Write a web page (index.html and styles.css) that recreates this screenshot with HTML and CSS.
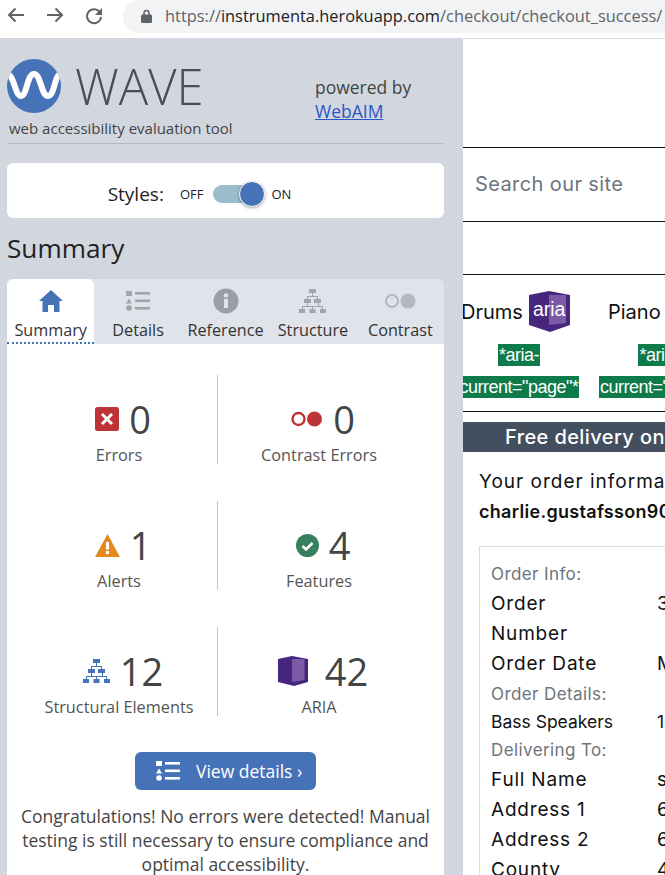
FILE: index.html
```html
<!DOCTYPE html>
<html lang="en">
<head>
  <meta charset="UTF-8">
  <meta name="viewport" content="width=device-width, initial-scale=1.0">
  <title>WAVE - Checkout Success</title>
  <link rel="stylesheet" href="styles.css">
</head>
<body>

  <!-- Browser toolbar -->
  <header class="toolbar">
    <svg class="tool" width="18" height="16" viewBox="0 0 18 16"><path d="M17 8H2M8.500 1.500 2 8l6.500 6.500" fill="none" stroke="#5f6368" stroke-width="2"/></svg>
    <svg class="tool" width="18" height="16" viewBox="0 0 18 16"><path d="M1 8h15M9.500 1.500 16 8l-6.500 6.500" fill="none" stroke="#5f6368" stroke-width="2"/></svg>
    <svg class="tool" width="18" height="18" viewBox="0 0 18 18"><path d="M15.500 6.500A7 7 0 1 0 16 10" fill="none" stroke="#5f6368" stroke-width="2"/><path d="M17 1v7h-7z" fill="#5f6368"/></svg>
    <div class="address">
      <svg width="11" height="14" viewBox="0 0 11 14"><path d="M3 6V4a2.500 2.500 0 0 1 5 0v2" fill="none" stroke="#5f6368" stroke-width="1.500"/><rect y="5.500" width="11" height="8.500" rx="1.500" fill="#5f6368"/></svg>
      <span class="url"><span class="url-dim">https://</span>instrumenta.herokuapp.com<span class="url-dim">/checkout/checkout_success/</span></span>
    </div>
  </header>

  <div class="split">

    <!-- WAVE sidebar -->
    <aside class="wave">
      <div class="brand">
        <div class="brand-left">
          <div class="logo-row">
            <svg width="54" height="54" viewBox="0 0 54 54"><clipPath id="logoClip"><circle cx="27" cy="27" r="27"/></clipPath><circle cx="27" cy="27" r="27" fill="#4673b7"/><path clip-path="url(#logoClip)" d="M0 15C7 15 8 37 14 37S20 15 27 15s7 22 14 22S47 15 54 15" fill="none" stroke="#fff" stroke-width="6"/></svg>
            <span class="logo-name">WAVE</span>
          </div>
          <div class="tagline">web accessibility evaluation tool</div>
        </div>
        <div class="powered">powered by<br><a href="#">WebAIM</a></div>
      </div>

      <div class="styles-card">
        <span class="styles-label">Styles:</span>
        <span class="styles-state">OFF</span>
        <span class="switch"><span class="knob"></span></span>
        <span class="styles-state">ON</span>
      </div>

      <h1>Summary</h1>

      <nav class="tabs">
        <a class="tab active" href="#">
          <svg width="26" height="24" viewBox="0 0 26 24"><path d="M13 1 1 12h3.500v11H10v-7h6v7h5.500V12H25z" fill="#4673b7"/></svg>
          Summary
        </a>
        <a class="tab" href="#">
          <svg width="24" height="20" viewBox="0 0 24 20" fill="#a2a5ab"><rect width="6" height="5"/><path d="M3 7.500 6 12.500H0z"/><circle cx="3" cy="17" r="2.800"/><rect x="9" y="1" width="15" height="2.600"/><rect x="9" y="8.500" width="15" height="2.600"/><rect x="9" y="16" width="15" height="2.600"/></svg>
          Details
        </a>
        <a class="tab" href="#">
          <svg width="26" height="26" viewBox="0 0 26 26"><circle cx="13" cy="13" r="12.500" fill="#9b9ea5"/><rect x="11" y="11" width="4" height="9" fill="#e0e3e9"/><circle cx="13" cy="7.500" r="2.200" fill="#e0e3e9"/></svg>
          Reference
        </a>
        <a class="tab" href="#">
          <svg width="27" height="24" viewBox="0 0 27 24" fill="#a2a5ab"><rect x="10" y="0" width="7" height="4"/><rect x="5" y="10" width="7" height="4"/><rect x="15" y="10" width="7" height="4"/><rect x="0" y="20" width="6" height="4"/><rect x="10.500" y="20" width="6" height="4"/><rect x="21" y="20" width="6" height="4"/><path d="M13 4h1v3h5v3h-1V8H9v2H8V7h5zM8 14h1v3h10v-3h1v3h4v3h-1v-2h-9v2h-1v-2H4v2H3v-3h5z"/></svg>
          Structure
        </a>
        <a class="tab" href="#">
          <svg width="32" height="16" viewBox="0 0 32 16"><circle cx="8" cy="8" r="6" fill="none" stroke="#b4b7bd" stroke-width="2"/><circle cx="24" cy="8" r="7.500" fill="#b4b7bd"/></svg>
          Contrast
        </a>
      </nav>

      <section class="panel">
        <div class="stats">
          <div class="stat">
            <div class="stat-top">
              <svg width="24" height="24" viewBox="0 0 24 24"><rect width="24" height="24" rx="2.500" fill="#bd3436"/><path d="M7 7l10 10M17 7 7 17" stroke="#fff" stroke-width="3"/></svg>
              <span class="num">0</span>
            </div>
            <div class="stat-name">Errors</div>
          </div>
          <div class="stat">
            <div class="stat-top">
              <svg width="32" height="16" viewBox="0 0 32 16"><circle cx="7.500" cy="8" r="6" fill="none" stroke="#bd3436" stroke-width="2.400"/><circle cx="23.500" cy="8" r="7.500" fill="#bd3436"/></svg>
              <span class="num">0</span>
            </div>
            <div class="stat-name">Contrast Errors</div>
          </div>
          <div class="stat">
            <div class="stat-top">
              <svg width="25" height="23" viewBox="0 0 25 23"><path d="M12.500 0 25 23H0z" fill="#e38c1c"/><rect x="11" y="8" width="3" height="7.500" fill="#fff"/><rect x="11" y="17" width="3" height="3" fill="#fff"/></svg>
              <span class="num">1</span>
            </div>
            <div class="stat-name">Alerts</div>
          </div>
          <div class="stat">
            <div class="stat-top">
              <svg width="23" height="23" viewBox="0 0 23 23"><circle cx="11.500" cy="11.500" r="11.500" fill="#36805f"/><path d="M6.500 12l3.500 3.500 6.500-6.500" fill="none" stroke="#fff" stroke-width="2.600"/></svg>
              <span class="num">4</span>
            </div>
            <div class="stat-name">Features</div>
          </div>
          <div class="stat">
            <div class="stat-top">
              <svg width="27" height="24" viewBox="0 0 27 24" fill="#4673b7"><rect x="10" y="0" width="7" height="4"/><rect x="5" y="10" width="7" height="4"/><rect x="15" y="10" width="7" height="4"/><rect x="0" y="20" width="6" height="4"/><rect x="10.500" y="20" width="6" height="4"/><rect x="21" y="20" width="6" height="4"/><path d="M13 4h1v3h5v3h-1V8H9v2H8V7h5zM8 14h1v3h10v-3h1v3h4v3h-1v-2h-9v2h-1v-2H4v2H3v-3h5z"/></svg>
              <span class="num">12</span>
            </div>
            <div class="stat-name">Structural Elements</div>
          </div>
          <div class="stat">
            <div class="stat-top">
              <svg width="30" height="30" viewBox="0 0 30 30"><path d="M0 3 14 0l16 3v23l-14 4-16-4z" fill="#47277d"/><path d="M14 3h12.500v21L14 26z" fill="#7b5ba6"/></svg>
              <span class="num num-wide">42</span>
            </div>
            <div class="stat-name">ARIA</div>
          </div>
        </div>

        <a class="details-btn" href="#">
          <svg width="24" height="20" viewBox="0 0 24 20" fill="#fff"><rect width="6" height="5"/><path d="M3 7.500 6 12.500H0z"/><circle cx="3" cy="17" r="2.800"/><rect x="9" y="1" width="15" height="2.600"/><rect x="9" y="8.500" width="15" height="2.600"/><rect x="9" y="16" width="15" height="2.600"/></svg>
          View details ›
        </a>

        <p class="congrats">Congratulations! No errors were detected! Manual testing is still necessary to ensure compliance and optimal accessibility.</p>
      </section>
    </aside>

    <!-- Page being evaluated -->
    <main class="site">
      <div class="site-top"></div>
      <div class="search">Search our site</div>
      <div class="site-gap"></div>
      <nav class="site-nav">
        <div class="nav-item first">
          <div class="nav-link">Drums
            <span class="aria-badge">
              <svg width="41" height="41" viewBox="0 0 41 41"><path d="M0 4 20 0l21 4v30l-20 7-21-7z" fill="#47277d"/><path d="M20 4h17v28l-17 2z" fill="#7b5ba6"/></svg>
              <span class="aria-word">aria</span>
            </span>
          </div>
          <span class="tag">*aria-</span>
          <span class="tag">current="page"*</span>
        </div>
        <div class="nav-item">
          <div class="nav-link">Piano</div>
          <span class="tag">*aria-</span>
          <span class="tag">current="page"*</span>
        </div>
      </nav>
      <div class="delivery">Free delivery on orders over €50</div>
      <div class="order">
        <p class="order-line">Your order information has been sent to</p>
        <p class="order-mail">charlie.gustafsson90@example.com</p>
        <div class="receipt">
          <div class="r-head">Order Info:</div>
          <div class="r-row"><span class="r-key r-narrow">Order Number</span><span>3F2A91</span></div>
          <div class="r-row"><span class="r-key">Order Date</span><span>March 3</span></div>
          <div class="r-head">Order Details:</div>
          <div class="r-row r-small"><span class="r-key">Bass Speakers</span><span>1</span></div>
          <div class="r-head">Delivering To:</div>
          <div class="r-row"><span class="r-key">Full Name</span><span>sample</span></div>
          <div class="r-row"><span class="r-key">Address 1</span><span>6 Main</span></div>
          <div class="r-row"><span class="r-key">Address 2</span><span>6 Main</span></div>
          <div class="r-row"><span class="r-key">County</span><span>4</span></div>
        </div>
      </div>
    </main>
  </div>

</body>
</html>
```

FILE: styles.css
```css
* { box-sizing: border-box; }
html, body { height: 875px; overflow: hidden; }
body { margin: 0; font-family: "Open Sans", sans-serif; color: #333; background-color: #fff; }

/* toolbar */
.toolbar { height: 38px; display: flex; align-items: flex-start; padding-left: 7px; }
.tool { margin-top: 7px; margin-right: 21px; flex: none; }
.address { flex: 1; min-width: 0; height: 33px; margin-left: -1px; padding: 0 0 2px 18px; display: flex; align-items: center; gap: 13px; background-color: #f1f3f4; border-radius: 17px 0 0 17px; overflow: hidden; white-space: nowrap; }
.url { font-size: 16.4px; color: #202124; }
.url-dim { color: #5f6368; }

.split { display: flex; height: 837px; }

/* WAVE sidebar */
.wave { width: 463px; flex: none; padding: 21px 19px 0 7px; background-color: #d2d7df; }
.brand { display: flex; height: 85px; border-bottom: 1px solid #b5bac2; }
.brand-left { width: 308px; }
.logo-row { display: flex; align-items: center; gap: 14px; height: 54px; }
.logo-name { font-size: 49px; font-weight: 300; color: #4a4d52; line-height: 54px; }
.tagline { font-size: 15px; line-height: 20px; margin: 5px 0 0 2px; color: #444; white-space: nowrap; }
.powered { font-size: 17.5px; line-height: 24px; padding-top: 16px; color: #444; }
.powered a { color: #2a56c6; }

.styles-card { height: 55px; margin-top: 19px; display: flex; align-items: center; justify-content: center; background-color: #fff; border-radius: 6px; padding: 7px 52px 0 0; color: #222; }
.styles-label { font-size: 19px; margin-right: 16px; }
.styles-state { font-size: 13px; }
.switch { position: relative; width: 46px; height: 18px; margin: 0 12px 0 10px; background-color: #9bbcc9; border-radius: 9px; }
.knob { position: absolute; right: -6px; top: -4px; width: 26px; height: 26px; border-radius: 50%; background-color: #4673b7; border: 1px solid #fff; box-shadow: 0 1px 3px rgba(0,0,0,0.35); }

h1 { font-size: 26.2px; font-weight: 400; line-height: 36px; margin: 12px 0 13px; color: #222; }

.tabs { display: flex; height: 65px; background-color: #e0e3e9; border-radius: 6px 6px 0 0; }
.tab { flex: 1; display: flex; flex-direction: column; align-items: center; justify-content: flex-end; gap: 5px; padding-bottom: 3px; font-size: 16.2px; line-height: 22px; color: #333; text-decoration: none; white-space: nowrap; }
.tab svg { height: 26px; }
.tab.active { background-color: #fff; border-radius: 6px 6px 0 0; border-bottom: 2px dotted #4673b7; padding-bottom: 1px; }

.panel { height: 531px; background-color: #fff; padding: 31px 14px 0; }
.stats { display: grid; grid-template-columns: 197px 202px; grid-auto-rows: 89px; row-gap: 37px; }
.stat { display: flex; flex-direction: column; align-items: center; justify-content: flex-end; }
.stat:nth-child(odd) { border-right: 1px solid #c6c6c6; }
.stat-top { display: flex; align-items: center; gap: 10px; height: 46px; padding-left: 8px; }
.num { font-size: 38px; line-height: 46px; color: #444; }
.num-wide { margin-left: 7px; }
.stat-name { font-size: 16.3px; line-height: 22px; margin: 2px 0 -2px; color: #555; white-space: nowrap; }

.details-btn { width: 181px; height: 38px; margin: 36px auto 0; padding-left: 21px; display: flex; align-items: center; gap: 16px; background-color: #4673b7; border-radius: 6px; font-size: 17.5px; color: #fff; text-decoration: none; }
.congrats { font-size: 17.5px; line-height: 24px; margin: 14px -4px 0; text-align: center; color: #444; }

/* page being evaluated */
.site { flex: 1; min-width: 0; border-top: 1px solid #ddd; overflow: hidden; white-space: nowrap; font-family: "Inter", sans-serif; color: #111; }
.site-top { height: 109px; border-bottom: 1px solid #111; }
.search { height: 74px; padding-left: 12px; line-height: 72px; font-size: 20px; letter-spacing: 0.4px; color: #6c757d; border-bottom: 1px solid #111; }
.site-gap { height: 53px; border-bottom: 1px solid #111; }
.site-nav { height: 137px; display: flex; gap: 21px; margin-left: -3px; border-bottom: 1px solid #111; }
.nav-item { display: flex; flex-direction: column; align-items: center; padding-top: 16px; }
.nav-item.first { width: 118px; }
.nav-link { display: flex; align-items: center; gap: 6px; height: 41px; align-self: flex-start; margin-left: 9px; font-size: 20px; }
.first .nav-link { margin-left: 1px; }
.aria-badge { position: relative; display: block; width: 41px; height: 41px; }
.aria-word { position: absolute; left: 4px; top: 7px; font-family: "Liberation Sans", sans-serif; font-size: 19.5px; color: #fff; }
.tag { display: block; margin-top: 12px; padding: 0 1px; background-color: #0f7a4a; font-family: "Liberation Sans", sans-serif; font-size: 18px; line-height: 22px; letter-spacing: -0.5px; color: #fff; }
.tag + .tag { margin-top: 10px; }
.delivery { height: 30px; margin-top: 10px; padding-left: 42px; background-color: #434f5f; font-size: 20px; font-weight: 500; line-height: 30px; letter-spacing: 0.4px; color: #fff; }
.order { padding: 15px 0 0 16px; }
.order-line, .order-mail { margin: 0; font-size: 19px; line-height: 30px; letter-spacing: 1px; }
.order-mail { font-size: 18px; font-weight: 600; letter-spacing: 0.3px; }
.receipt { width: 400px; margin-top: 19px; padding: 12px 0 0 11px; border: 1px solid #ddd; }
.r-head { font-size: 17px; line-height: 30px; letter-spacing: 0.4px; color: #6c757d; }
.r-row { display: flex; font-size: 19px; line-height: 30px; letter-spacing: 0.8px; }
.r-small { font-size: 17.5px; line-height: 26px; letter-spacing: 0; }
.r-key { width: 166px; flex: none; }
.r-narrow { white-space: normal; padding-right: 70px; }
```
